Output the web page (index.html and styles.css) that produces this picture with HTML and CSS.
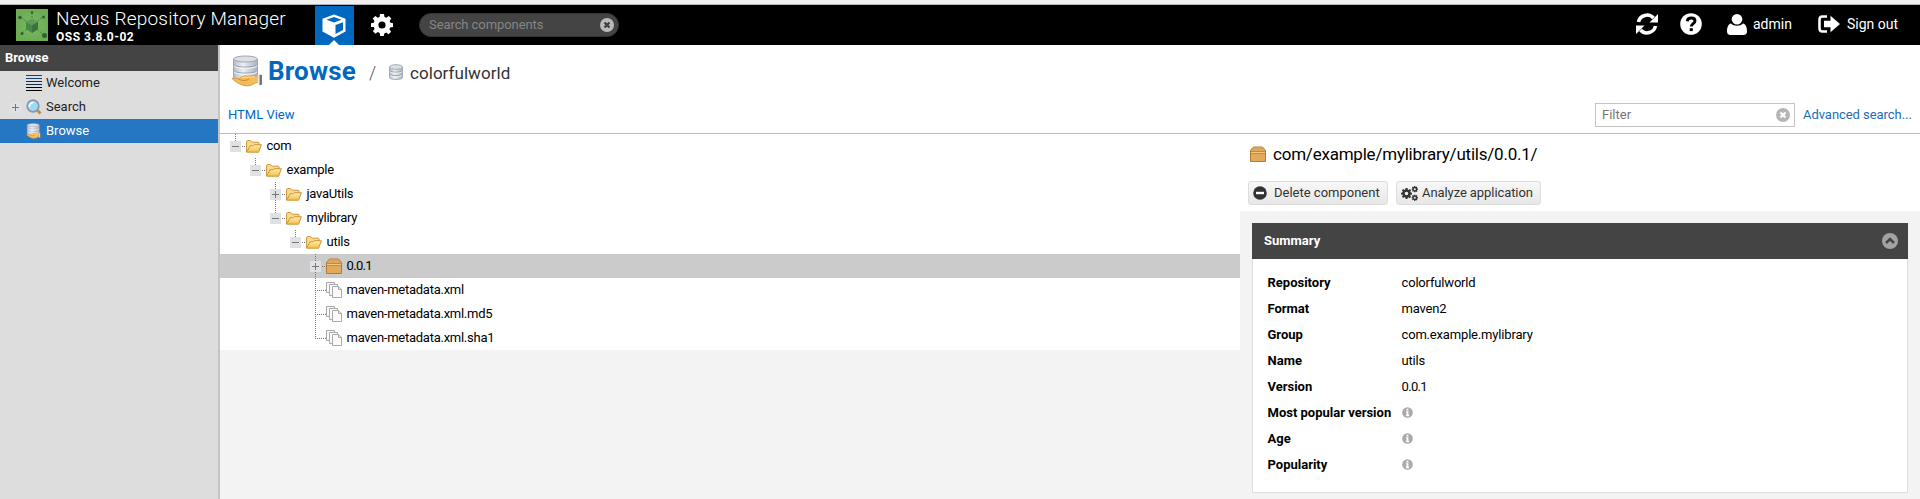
FILE: index.html
```html
<!DOCTYPE html>
<html lang="en">
<head>
<meta charset="utf-8">
<title>Nexus Repository Manager</title>
<link rel="stylesheet" href="styles.css">
</head>
<body>
<svg class="defs" width="0" height="0">
  <defs>
    <linearGradient id="steel" x1="0" x2="1" y1="0" y2="0"><stop offset="0" stop-color="#b5bcc6"/><stop offset=".4" stop-color="#eceff3"/><stop offset="1" stop-color="#a9b1bc"/></linearGradient>
    <linearGradient id="gold" x1="0" x2="0" y1="0" y2="1"><stop offset="0" stop-color="#fff0a8"/><stop offset="1" stop-color="#f3bd4e"/></linearGradient>
    <linearGradient id="wood" x1="0" x2="0" y1="0" y2="1"><stop offset="0" stop-color="#dca659"/><stop offset="1" stop-color="#e3ab5e"/></linearGradient>
    <radialGradient id="leaf"><stop offset="0" stop-color="#7cb862"/><stop offset="1" stop-color="#6dac55"/></radialGradient>
    <symbol id="db" viewBox="0 0 16 16"><path d="M1.500 3v10.500c0 2.600 13 2.600 13 0V3" fill="url(#steel)" stroke="#a4abb4"/><ellipse cx="8" cy="3" rx="6.500" ry="2.300" fill="#dde1e6" stroke="#a4abb4"/><path d="M2 6.500c1 2.200 11 2.200 12 0M2 10c1 2.200 11 2.200 12 0" fill="none" stroke="#98a1ad"/><path d="M2 7.500c1 2.200 11 2.200 12 0M2 11c1 2.200 11 2.200 12 0" fill="none" stroke="#f5f7f9" stroke-width=".7"/></symbol>
    <symbol id="dbhand" viewBox="0 0 32 32"><path d="M2.500 4v18c0 4 24 4 24 0V4" fill="url(#steel)" stroke="#a0a7b1"/><ellipse cx="14.500" cy="4" rx="12" ry="3" fill="#dce0e5" stroke="#a0a7b1"/><path d="M3 9.500c1 3.500 22 3.500 23 0M3 15.500c1 3.500 22 3.500 23 0" fill="none" stroke="#98a1ad"/><path d="M3 10.700c1 3.500 22 3.500 23 0M3 16.700c1 3.500 22 3.500 23 0" fill="none" stroke="#f7f8fa"/><path d="M1 23.500c2-.8 4.500 0 7 .3 2-2.300 5-3.300 8-2.800 4 .4 6-.6 10.500-.2v6.700c-3 .2-4.500 2.500-8 3.200-6 1-12-2-17.500-7.200z" fill="#f4bc58" stroke="#cf923c" stroke-width=".8"/><path d="M8 24.500c4 1.500 8 1.300 10-.7" fill="none" stroke="#c98a34"/><path d="M11 22.600c4-1.300 8 .2 13-.8" fill="none" stroke="#ffe09a"/><path d="M26.500 20h2v10l-2-1z" fill="#e4e6e9"/><path d="M28.500 19.500l2.500.5v9.500l-2.500 1z" fill="#70757b"/></symbol>
    <symbol id="folder" viewBox="0 0 16 13"><path d="M.6 12V1.600q0-1 1-1h3l1.500 1.600h6q1 0 1 1V5" fill="#f8dc8c" stroke="#cf943a"/><path d="M.7 12.200L4 5.800h3l1-1.100h7.400l-2.800 7.500z" fill="url(#gold)" stroke="#cf943a"/></symbol>
    <symbol id="box" viewBox="0 0 16 16"><path d="M.5 4.500L3.500 1h9l3 3.500v11H.5z" fill="url(#wood)" stroke="#b87a2e"/><path d="M3.500 1.500h9l2 3h-13z" fill="#dba75c"/><path d="M1 5.500h14M1 7.200h14" stroke="#b8792d" stroke-width=".8"/><path d="M1 6.400h14" stroke="#f5cc89"/></symbol>
    <symbol id="pages" viewBox="0 0 16 16"><g fill="#fafafa" stroke="#a9a9a9"><path d="M.5.500h8v10h-8z"/><path d="M3.500 2.500h8v11h-8z"/><path d="M6.500 4.500h6l3 3v8h-9z"/><path d="M12.500 4.500v3h3" fill="#ddd"/></g></symbol>
    <symbol id="info" viewBox="0 0 12 12"><circle cx="6" cy="6" r="5.800" fill="#aaa"/><path d="M5 2h2v1.700H5zM4.300 4.700H7v3.800h.8V10H4.200V8.500H5V6.100h-.7z" fill="#fff"/></symbol>
    <symbol id="gear" viewBox="0 0 22 22"><path fill-rule="evenodd" fill="currentColor" d="M9 0h4l.5 3 1.800.800L17.800 2l2.500 2.500-1.700 2.600.8 1.700 2.600.5v3.600l-2.800.6-.8 1.800 1.700 2.500-2.500 2.500-2.400-1.700-1.900.8L12.800 22H9.200l-.5-3.100-1.900-.8-2.400 1.700-2.500-2.500 1.700-2.500-.8-1.800L0 12.900V9.300l2.700-.5.8-1.700-1.700-2.600L4.300 2l2.500 1.800L8.600 3zM11 7.400a3.600 3.600 0 100 7.200 3.600 3.600 0 000-7.200z"/></symbol>
  </defs>
</svg>
<div class="strip"></div>
<header class="topbar">
  <svg class="logo" viewBox="0 0 32 32"><path d="M0 0h32v32H0z" fill="url(#leaf)"/><path d="M16 16V3M16 16L4 8M16 16L28 7M16 16L5 25M16 16l12 10" stroke="#4a8049" stroke-dasharray="2 1.500"/><path d="M16 10l6 3v7l-6 4-6-4v-7z" fill="#458649"/><path d="M16 10l6 3-6 3.500L10 13z" fill="#5d9c59"/><path d="M16 16.500l6-3.500v7l-6 4z" fill="#3a7340"/><g fill="#315f37"><circle cx="16" cy="3.500" r="1.300"/><circle cx="4" cy="8.500" r="1.800"/><circle cx="27.500" cy="8" r="1.500"/><circle cx="6" cy="24.500" r="1.500"/><circle cx="28.500" cy="26.500" r="2.500"/></g></svg>
  <div class="brand"><span class="brand-name">Nexus Repository Manager</span><span class="brand-version">OSS 3.8.0-02</span></div>
  <div class="mode active"><svg width="24" height="24" viewBox="0 0 24 24"><path fill="#fff" fill-rule="evenodd" d="M12 .5L23.500 4.700V17.500L12 23.700.5 17.500V4.700zM12 3L4.500 5.700 12 8.500l7.500-2.800zM13.500 11v9l7.500-4V8.200z"/></svg></div>
  <div class="mode"><svg width="22" height="22"><use href="#gear"/></svg></div>
  <div class="global-search"><span>Search components</span><svg width="14" height="14" viewBox="0 0 14 14"><circle cx="7" cy="7" r="7" fill="#bbb"/><path d="M4.500 4.500l5 5m0-5l-5 5" stroke="#3f3f3f" stroke-width="2.300"/></svg></div>
  <nav class="user-nav">
    <svg class="refresh" viewBox="0 0 22 22"><path d="M2.500 9A8.700 8.700 0 0117.500 5M19.500 13A8.700 8.700 0 014.500 17" fill="none" stroke="#fff" stroke-width="3.600"/><path d="M22 1v8.500h-8.500zM0 21v-8.500h8.500z" fill="#fff"/></svg>
    <svg class="help" viewBox="0 0 22 22"><circle cx="11" cy="11" r="10.800" fill="#fff"/><path d="M7.200 8.200c.7-4.300 7.800-4 7.800-.2 0 2.700-3.700 2.700-3.700 5.500" fill="none" stroke="#000" stroke-width="2.900"/><path d="M9.700 15.200h3.100v2.900H9.700z"/></svg>
    <svg class="person" viewBox="0 0 20 21"><path d="M4 9.500C1 10 0 14 0 17.500 0 20 1.500 21 3.500 21h13c2 0 3.500-1 3.500-3.500 0-3.500-1-7.500-4-8-1.500 1.500-3.500 2.200-6 2.200S5.500 11 4 9.500z" fill="#fff"/><circle cx="10" cy="5.300" r="5.300" fill="#fff"/></svg>
    <span class="admin">admin</span>
    <svg class="exit" viewBox="0 0 22 18"><path d="M9 1.500H4.500q-3 0-3 3v9q0 3 3 3H9" fill="none" stroke="#fff" stroke-width="2.500"/><path d="M6 5.800h6.500V.8L22 9l-9.500 8.200v-5H6z" fill="#fff"/></svg>
    <span class="signout">Sign out</span>
  </nav>
</header>
<div class="workspace">
  <aside class="sidebar">
    <div class="side-title">Browse</div>
    <div class="side-item"><i class="toggle none"></i><svg width="16" height="16" viewBox="0 0 16 16"><path d="M0 .5h16M0 3.500h16" stroke="#17406c"/><path d="M0 6.500h16M0 9.500h16" stroke="#102b49"/><path d="M0 12.500h16M0 15.500h16" stroke="#000"/></svg><span>Welcome</span></div>
    <div class="side-item"><i class="toggle plus"></i><svg width="16" height="16" viewBox="0 0 16 16"><path d="M11 11l3.500 3.500" stroke="#c58b3d" stroke-width="3"/><circle cx="7" cy="7" r="5.800" fill="#9edaf5" stroke="#8997a8" stroke-width="1.700"/><path d="M3.500 8a4 4 0 014-4.500" fill="none" stroke="#fff" stroke-width="1.500"/></svg><span>Search</span></div>
    <div class="side-item selected"><i class="toggle none"></i><svg width="16" height="16"><use href="#dbhand"/></svg><span>Browse</span></div>
  </aside>
  <main class="content">
    <div class="heading"><svg class="heading-icon"><use href="#dbhand"/></svg><h1>Browse</h1><span class="slash">/</span><svg class="crumb-icon"><use href="#db"/></svg><span class="crumb">colorfulworld</span></div>
    <div class="tools"><a class="html-view">HTML View</a><div class="filter"><span>Filter</span><svg width="14" height="14" viewBox="0 0 14 14"><circle cx="7" cy="7" r="7" fill="#b5b5b5"/><path d="M4.500 4.500l5 5m0-5l-5 5" stroke="#fff" stroke-width="2.300"/></svg></div><a class="advanced">Advanced search...</a></div>
    <div class="panes">
      <div class="tree">
        <div class="node d0 up"><i class="toggle minus"></i><svg class="f"><use href="#folder"/></svg><span>com</span></div>
        <div class="node d1 up"><i class="toggle minus"></i><svg class="f"><use href="#folder"/></svg><span>example</span></div>
        <div class="node d2 up down"><i class="toggle plus"></i><svg class="f"><use href="#folder"/></svg><span>javaUtils</span></div>
        <div class="node d2 up"><i class="toggle minus"></i><svg class="f"><use href="#folder"/></svg><span>mylibrary</span></div>
        <div class="node d3 up"><i class="toggle minus"></i><svg class="f"><use href="#folder"/></svg><span>utils</span></div>
        <div class="node d4 up down current"><i class="toggle plus"></i><svg class="p"><use href="#box"/></svg><span class="num">0.0.1</span></div>
        <div class="node d4 up down file"><i class="toggle leaf"></i><svg class="p"><use href="#pages"/></svg><span>maven-metadata.xml</span></div>
        <div class="node d4 up down file"><i class="toggle leaf"></i><svg class="p"><use href="#pages"/></svg><span>maven-metadata.xml.md5</span></div>
        <div class="node d4 up file"><i class="toggle leaf"></i><svg class="p"><use href="#pages"/></svg><span>maven-metadata.xml.sha1</span></div>
      </div>
      <section class="detail">
        <div class="detail-title"><svg width="16" height="16"><use href="#box"/></svg><span>com/example/mylibrary/utils/0.0.1/</span></div>
        <div class="actions">
          <div class="button delete"><svg width="14" height="14" viewBox="0 0 14 14"><circle cx="7" cy="7" r="6.800" fill="#333"/><path d="M3 5.800h8v2.400H3z" fill="#fff"/></svg><span>Delete component</span></div>
          <div class="button analyze"><svg width="17" height="15" viewBox="0 0 17 15"><use href="#gear" x="0" y="2" width="11" height="11"/><use href="#gear" x="10.500" y="0" width="6.500" height="6.500"/><use href="#gear" x="10.500" y="8.500" width="6.500" height="6.500"/></svg><span>Analyze application</span></div>
        </div>
        <div class="detail-body">
          <div class="card">
            <div class="card-head"><span>Summary</span><svg width="16" height="16" viewBox="0 0 16 16"><circle cx="8" cy="8" r="8" fill="#a3a3a3"/><path d="M4 10l4-4 4 4" fill="none" stroke="#444" stroke-width="2.500"/></svg></div>
            <dl>
              <dt>Repository</dt><dd>colorfulworld</dd>
              <dt>Format</dt><dd>maven2</dd>
              <dt>Group</dt><dd>com.example.mylibrary</dd>
              <dt>Name</dt><dd>utils</dd>
              <dt>Version</dt><dd class="num">0.0.1</dd>
              <dt>Most popular version</dt><dd><svg width="11" height="11"><use href="#info"/></svg></dd>
              <dt>Age</dt><dd><svg width="11" height="11"><use href="#info"/></svg></dd>
              <dt>Popularity</dt><dd><svg width="11" height="11"><use href="#info"/></svg></dd>
            </dl>
          </div>
        </div>
      </section>
    </div>
  </main>
</div>
</body>
</html>
```
FILE: styles.css
```css
* { box-sizing: border-box; }
body { margin: 0; width: 1920px; height: 499px; overflow: hidden; display: flex; flex-direction: column; background: #fff; color: #000; font: 13px/24px Roboto, "Liberation Sans", sans-serif; white-space: nowrap; }
svg { flex: none; display: block; }
.defs { position: absolute; }

/* Top bar */
.strip { height: 5px; flex: none; background: #f0f0f0; border-bottom: 1px solid #b4b4b4; }
.topbar { height: 40px; flex: none; background: #000; color: #fff; display: flex; padding-left: 16px; }
.logo { width: 32px; height: 32px; margin-top: 4px; }
.brand { width: 267px; padding-left: 8px; display: flex; flex-direction: column; }
.brand-name { font-size: 19px; font-weight: 300; line-height: 27px; letter-spacing: .2px; }
.brand-version { font-size: 12px; font-weight: 700; line-height: 10px; letter-spacing: .5px; }
.mode { width: 39px; height: 39px; margin-top: 1px; display: flex; justify-content: center; padding-top: 8px; }
.mode + .mode { margin-left: 8px; }
.mode.active { background: #0069bf; position: relative; padding-right: 1px; }
.mode.active::after { content: ""; position: absolute; bottom: 0; left: 14px; border: 5px solid transparent; border-top: 0; border-bottom-color: #fff; }
.global-search { margin: 8px 0 0 18px; width: 200px; height: 24px; border-radius: 12px; border: 1px solid #333; background: #444; color: #858585; display: flex; align-items: center; justify-content: space-between; padding: 0 4px 0 9px; letter-spacing: -.08px; }
.user-nav { margin-left: auto; margin-right: 22px; display: flex; align-items: center; padding-bottom: 2px; }
.refresh, .help { width: 22px; height: 22px; }
.help { margin-left: 22px; }
.person { width: 20px; height: 21px; margin-left: 25px; }
.admin { margin-left: 6px; width: 40px; font-size: 14px; }
.exit { width: 22px; height: 18px; margin-left: 25px; }
.signout { margin-left: 7px; width: 51px; font-size: 14px; }

/* Sidebar */
.workspace { flex: 1; display: flex; min-height: 0; }
.sidebar { width: 220px; flex: none; background: #ddd; border-right: 2px solid #c4c4c4; }
.side-title { height: 26px; background: #444; color: #fff; font-weight: 700; line-height: 26px; padding-left: 5px; }
.side-item { height: 24px; display: flex; align-items: center; padding-left: 10px; color: #222; }
.side-item svg { margin-left: 5px; margin-right: 4px; }
.side-item.selected { background: #2576c3; color: #fff; }

/* Expander */
.toggle { width: 11px; height: 11px; flex: none; background: #dfe1e5; position: relative; }
.toggle.none, .toggle.leaf { background: none; }
.plus::before, .minus::before { content: ""; position: absolute; left: 2px; top: 5px; width: 7px; height: 1px; background: #777; }
.plus::after { content: ""; position: absolute; left: 5px; top: 2px; width: 1px; height: 7px; background: #777; }

/* Page heading and tools */
.content { flex: 1; display: flex; flex-direction: column; min-width: 0; }
.heading { height: 55px; flex: none; display: flex; align-items: center; padding-left: 11px; }
.heading-icon { width: 32px; height: 32px; margin-top: -3px; }
h1 { margin: -3px 0 0 5px; width: 88px; font-size: 26px; line-height: 32px; color: #0069bf; letter-spacing: .2px; }
.slash { width: 10px; margin-left: 13px; font-size: 18px; font-weight: 300; color: #555; }
.crumb-icon { width: 16px; height: 16px; margin: -2px 6px 0 9px; }
.crumb { font-size: 17px; color: #333; letter-spacing: .05px; }
.tools { height: 34px; flex: none; display: flex; align-items: center; color: #1e6db5; padding: 0 0 3px 9px; border-bottom: 1px solid #bcbcbc; }
.html-view { color: #0069bf; margin-left: -1px; }
.filter { margin-left: auto; width: 200px; height: 24px; border: 1px solid #c4c4c4; background: #fff; color: #757575; display: flex; align-items: center; justify-content: space-between; padding: 0 4px 0 6px; }
.advanced { width: 109px; margin: 0 8px; letter-spacing: -.05px; }

/* Tree */
.panes { flex: 1; min-height: 0; display: flex; background: #f3f3f3; }
.tree { width: 1020px; letter-spacing: -.26px; }
.node { height: 24px; display: flex; align-items: center; background-color: #fff; position: relative; background-image: linear-gradient(#777, #777), linear-gradient(#777, #777); background-repeat: no-repeat; background-size: 1px 1px; background-position: calc(var(--x) + 7px) 12px, calc(var(--x) + 9px) 12px; }
.d0 { --x: 15px; padding-left: 10px; }
.d1 { --x: 35px; padding-left: 30px; }
.d2 { --x: 55px; padding-left: 50px; }
.d3 { --x: 75px; padding-left: 70px; }
.d4 { --x: 95px; padding-left: 90px; }
.file { background-image: none; }
.current { background-color: #cbcbcb; }
.node .toggle { margin-right: 5px; }
.node svg { margin-right: 4.500px; }
.node .f { width: 16px; height: 13px; }
.node .p { width: 16px; height: 16px; }
.leaf::before { content: ""; position: absolute; left: 7px; top: 5px; width: 9px; height: 1px; background: repeating-linear-gradient(90deg, #777 0 1px, transparent 1px 2px); }
.up::before { content: ""; position: absolute; left: var(--x); top: 0; width: 1px; height: 7px; background: repeating-linear-gradient(#777 0 1px, transparent 1px 2px); }
.down::after { content: ""; position: absolute; left: var(--x); bottom: 0; width: 1px; height: 6px; background: repeating-linear-gradient(#777 0 1px, transparent 1px 2px); }
.file.up::before { height: 13px; }
.file.down::after { height: 12px; }
.num { letter-spacing: -.65px; }

/* Component detail */
.detail { flex: 1; display: flex; flex-direction: column; }
.detail-title { background: #fff; height: 41px; flex: none; display: flex; align-items: center; gap: 7px; padding: 0 0 2px 10px; font-size: 17px; letter-spacing: -.22px; }
.actions { background: #fff; height: 36px; flex: none; padding: 6px 0 0 8px; display: flex; gap: 8px; }
.button { height: 24px; border: 1px solid #ddd; border-radius: 3px; background: linear-gradient(#f7f7f7, #e7e7e7); color: #333; display: flex; align-items: center; padding-left: 4px; }
.delete { width: 140px; gap: 7px; }
.analyze { width: 145px; gap: 4px; letter-spacing: -.08px; }
.detail-body { padding: 12px 12px 0; }
.card { height: 270px; width: 656px; background: #fff; border: 1px solid #ddd; }
.card-head { margin: -1px -1px 0; height: 36px; background: #444; color: #fff; font-weight: 700; display: flex; align-items: center; justify-content: space-between; padding: 0 10px 0 12px; }
dl { margin: 11px 0 0 14.500px; display: grid; grid-template-columns: 134px 1fr; grid-auto-rows: 26px; align-items: center; }
dt { font-weight: 700; }
dd { margin: 0; }
dd svg { margin-top: -1px; }
dd:not(.num) { letter-spacing: -.17px; }
```
